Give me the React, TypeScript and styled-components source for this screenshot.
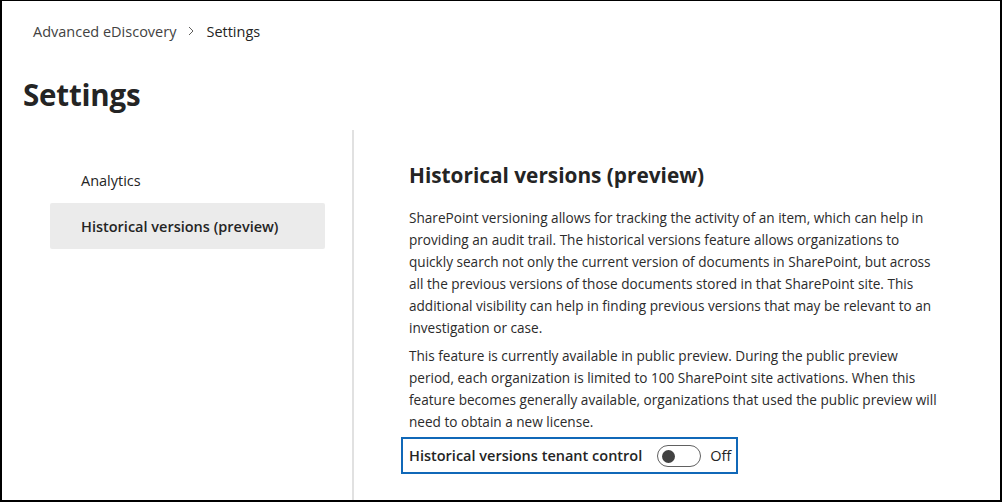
import React, { useState } from "react";
import styled, { createGlobalStyle } from "styled-components";

const GlobalStyle = createGlobalStyle`
  html, body {
    margin: 0;
    padding: 0;
    background: #fff;
  }
  body {
    font-family: "Open Sans", "Noto Sans", Arial, sans-serif;
    color: #242424;
  }
`;

const Frame = styled.div`
  width: 1002px;
  height: 502px;
  box-sizing: border-box;
  border: 2px solid #000;
  border-top-width: 1px;
  display: flex;
  flex-direction: column;
  overflow: hidden;
`;

const Breadcrumb = styled.nav`
  display: flex;
  align-items: center;
  gap: 9px;
  padding: 18px 0 0 31px;
  height: 24px;
  font-size: 14.5px;
  color: #323130;
`;

const Crumb = styled.span<{ current?: boolean }>`
  color: ${(p) => (p.current ? "#242424" : "#424242")};
`;

const PageTitle = styled.h1`
  margin: 34px 0 0 21px;
  font-size: 29.5px;
  line-height: 36px;
  font-weight: 700;
  color: #242424;
  letter-spacing: -0.2px;
`;

const Body = styled.div`
  flex: 1;
  display: flex;
  margin-top: 17px;
`;

const SideNav = styled.ul`
  list-style: none;
  margin: 0;
  padding: 27px 0 0 48px;
  width: 352px;
  flex-shrink: 0;
  box-sizing: border-box;
  border-right: 2px solid #e1e1e1;
`;

const NavItem = styled.li<{ selected?: boolean }>`
  width: 275px;
  height: 46px;
  display: flex;
  align-items: center;
  padding-left: 31px;
  box-sizing: border-box;
  border-radius: 2px;
  font-size: 14.5px;
  font-weight: ${(p) => (p.selected ? 600 : 400)};
  color: #242424;
  background: ${(p) => (p.selected ? "#ebebeb" : "transparent")};
  cursor: pointer;
`;

const Content = styled.section`
  flex: 1;
  padding: 31px 0 0 55px;
`;

const SectionTitle = styled.h2`
  margin: 0;
  font-size: 20.8px;
  line-height: 28px;
  font-weight: 700;
  color: #242424;
`;

const Paragraph = styled.p`
  margin: 0;
  font-size: 13.6px;
  line-height: 22px;
  color: #2b2b2b;
  & + & {
    margin-top: 6px;
  }
`;

const Line = styled.span`
  display: block;
  white-space: nowrap;
`;

const Intro = styled.div`
  margin-top: 18px;
`;

const ControlBox = styled.div`
  display: inline-flex;
  align-items: center;
  margin: 4px 0 0 -8px;
  height: 37px;
  box-sizing: border-box;
  padding: 0 5px 0 6px;
  border: 2px solid #1068b8;
`;

const ControlLabel = styled.span`
  font-size: 14.5px;
  font-weight: 600;
  color: #242424;
  margin-right: 15px;
`;

const Track = styled.button<{ on: boolean }>`
  position: relative;
  width: 44px;
  height: 22px;
  padding: 0;
  box-sizing: border-box;
  border-radius: 11px;
  border: 1px solid ${(p) => (p.on ? "#0f6cbd" : "#616161")};
  background: ${(p) => (p.on ? "#0f6cbd" : "#fff")};
  cursor: pointer;
`;

const Knob = styled.span<{ on: boolean }>`
  position: absolute;
  top: 4px;
  left: ${(p) => (p.on ? "25px" : "4px")};
  width: 13px;
  height: 13px;
  border-radius: 50%;
  background: ${(p) => (p.on ? "#fff" : "#424242")};
`;

const StateText = styled.span`
  margin-left: 9px;
  font-size: 14.5px;
  color: #242424;
`;

const Chevron = () => (
  <svg width="12" height="12" viewBox="0 0 12 12" fill="none">
    <path d="M4 2l4 4-4 4" stroke="#605e5c" strokeWidth="1" />
  </svg>
);

const introLines = [
  "SharePoint versioning allows for tracking the activity of an item, which can help in",
  "providing an audit trail. The historical versions feature allows organizations to",
  "quickly search not only the current version of documents in SharePoint, but across",
  "all the previous versions of those documents stored in that SharePoint site. This",
  "additional visibility can help in finding previous versions that may be relevant to an",
  "investigation or case.",
];

const previewLines = [
  "This feature is currently available in public preview. During the public preview",
  "period, each organization is limited to 100 SharePoint site activations. When this",
  "feature becomes generally available, organizations that used the public preview will",
  "need to obtain a new license.",
];

const App: React.FC = () => {
  const [selected, setSelected] = useState(1);
  const [enabled, setEnabled] = useState(false);
  const navItems = ["Analytics", "Historical versions (preview)"];

  return (
    <>
      <GlobalStyle />
      <Frame>
        <Breadcrumb>
          <Crumb>Advanced eDiscovery</Crumb>
          <Chevron />
          <Crumb current>Settings</Crumb>
        </Breadcrumb>
        <PageTitle>Settings</PageTitle>
        <Body>
          <SideNav>
            {navItems.map((item, i) => (
              <NavItem
                key={item}
                selected={selected === i}
                onClick={() => setSelected(i)}
              >
                {item}
              </NavItem>
            ))}
          </SideNav>
          <Content>
            <SectionTitle>Historical versions (preview)</SectionTitle>
            <Intro>
              <Paragraph>
                {introLines.map((l) => (
                  <Line key={l}>{l}</Line>
                ))}
              </Paragraph>
              <Paragraph>
                {previewLines.map((l) => (
                  <Line key={l}>{l}</Line>
                ))}
              </Paragraph>
            </Intro>
            <ControlBox>
              <ControlLabel>Historical versions tenant control</ControlLabel>
              <Track on={enabled} onClick={() => setEnabled(!enabled)}>
                <Knob on={enabled} />
              </Track>
              <StateText>{enabled ? "On" : "Off"}</StateText>
            </ControlBox>
          </Content>
        </Body>
      </Frame>
    </>
  );
};

export default App;
